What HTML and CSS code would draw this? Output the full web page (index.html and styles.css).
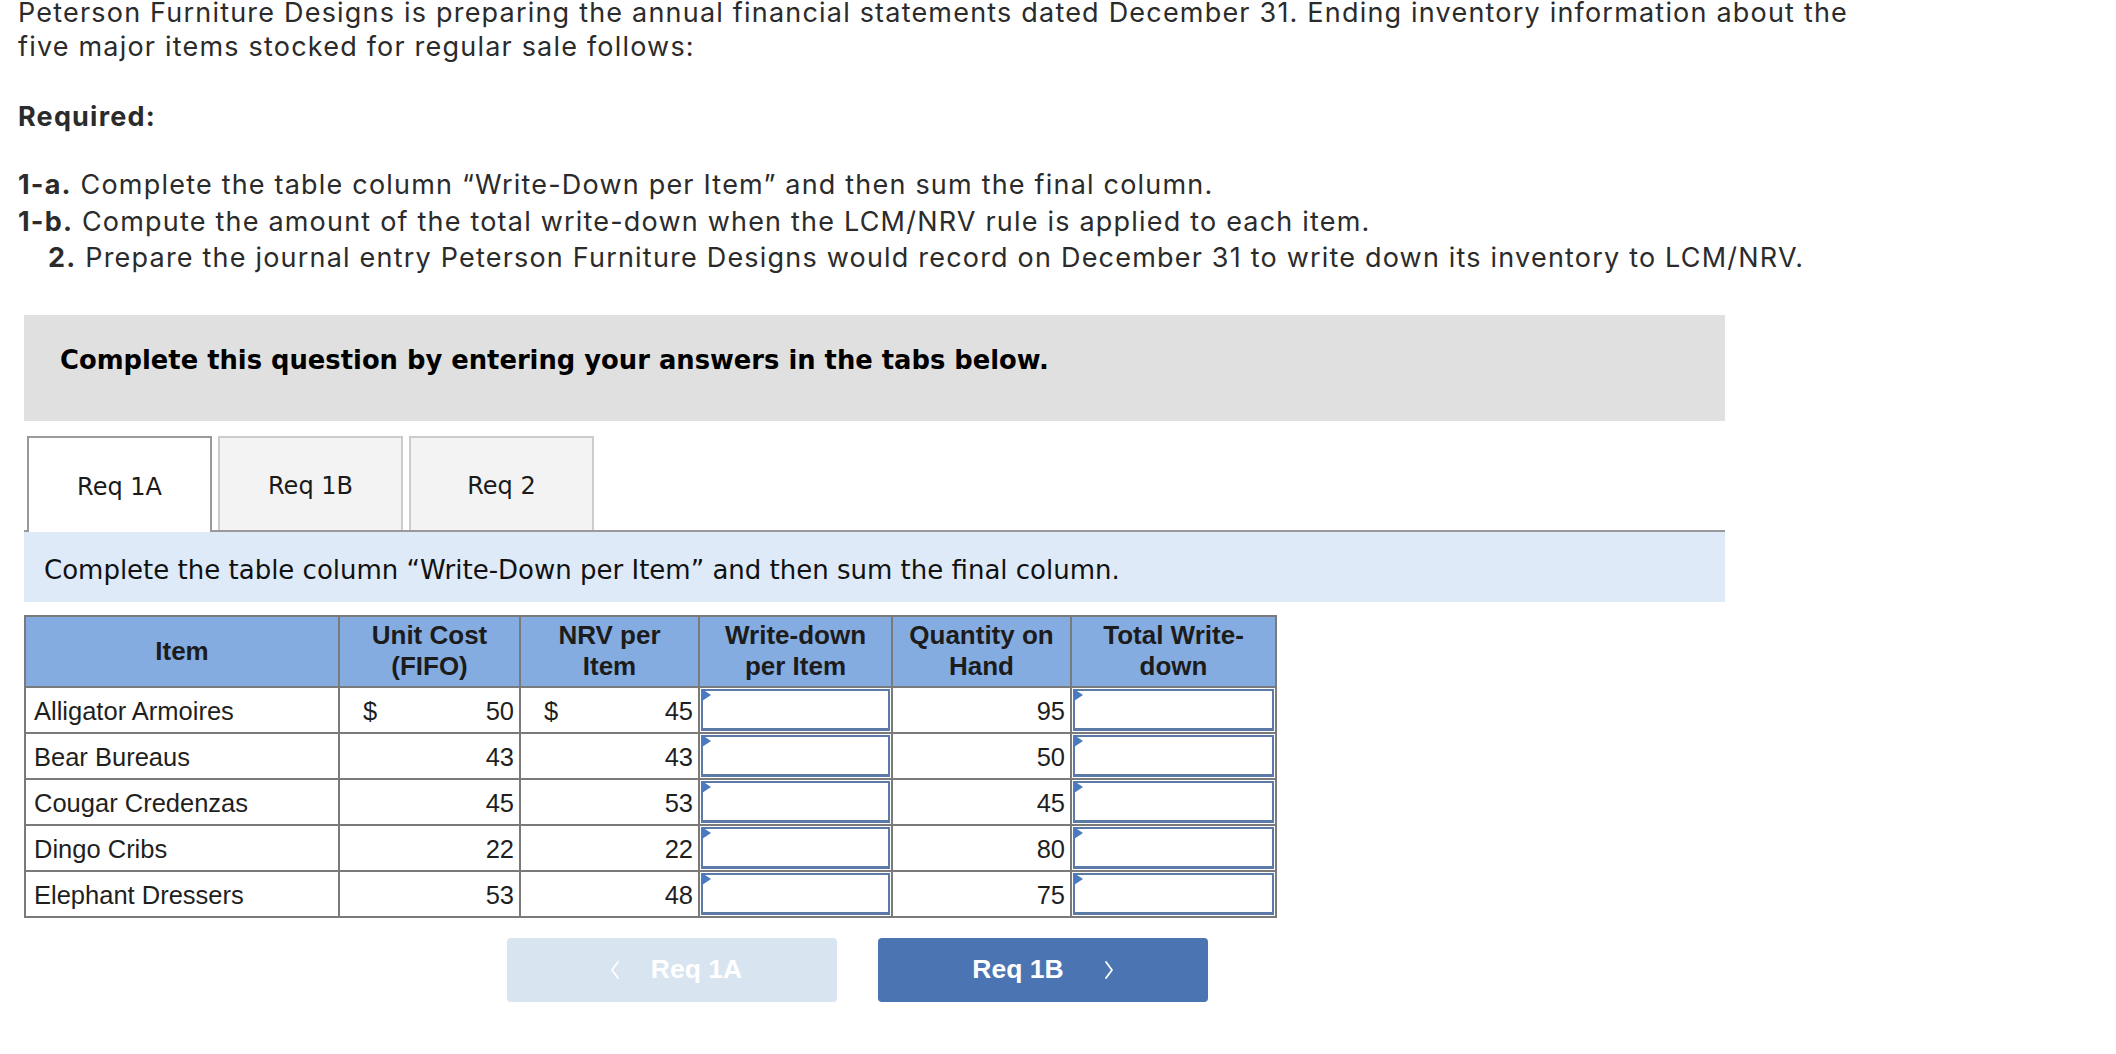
FILE: index.html
```html
<!DOCTYPE html>
<html lang="en">
<head>
<meta charset="utf-8">
<title>Peterson Furniture Designs</title>
<link rel="stylesheet" href="styles.css">
</head>
<body>
<div class="page">
  <p class="intro">Peterson Furniture Designs is preparing the annual financial statements dated December 31. Ending inventory information about the five major items stocked for regular sale follows:</p>
  <p class="req-title">Required:</p>
  <div class="req-list">
    <div class="req"><b>1-a.</b> Complete the table column “Write-Down per Item” and then sum the final column.</div>
    <div class="req"><b>1-b.</b> Compute the amount of the total write-down when the LCM/NRV rule is applied to each item.</div>
    <div class="req req-indent"><b>2.</b> Prepare the journal entry Peterson Furniture Designs would record on December 31 to write down its inventory to LCM/NRV.</div>
  </div>

  <div class="instructions">Complete this question by entering your answers in the tabs below.</div>

  <div class="tabs">
    <div class="tab active">Req 1A</div>
    <div class="tab">Req 1B</div>
    <div class="tab">Req 2</div>
  </div>

  <div class="prompt">Complete the table column “Write-Down per Item” and then sum the final column.</div>

  <table class="grid">
    <colgroup>
      <col class="c-item">
      <col class="c-cost">
      <col class="c-nrv">
      <col class="c-wd">
      <col class="c-qty">
      <col class="c-total">
    </colgroup>
    <thead>
      <tr>
        <th>Item</th>
        <th>Unit Cost<br>(FIFO)</th>
        <th>NRV per<br>Item</th>
        <th>Write-down<br>per Item</th>
        <th>Quantity on<br>Hand</th>
        <th>Total Write-<br>down</th>
      </tr>
    </thead>
    <tbody>
      <tr>
        <td class="name">Alligator Armoires</td>
        <td class="num"><span class="cur">$</span>50</td>
        <td class="num"><span class="cur">$</span>45</td>
        <td class="inp"><span class="flag"></span><span class="box"></span></td>
        <td class="num">95</td>
        <td class="inp"><span class="flag"></span><span class="box"></span></td>
      </tr>
      <tr>
        <td class="name">Bear Bureaus</td>
        <td class="num">43</td>
        <td class="num">43</td>
        <td class="inp"><span class="flag"></span><span class="box"></span></td>
        <td class="num">50</td>
        <td class="inp"><span class="flag"></span><span class="box"></span></td>
      </tr>
      <tr>
        <td class="name">Cougar Credenzas</td>
        <td class="num">45</td>
        <td class="num">53</td>
        <td class="inp"><span class="flag"></span><span class="box"></span></td>
        <td class="num">45</td>
        <td class="inp"><span class="flag"></span><span class="box"></span></td>
      </tr>
      <tr>
        <td class="name">Dingo Cribs</td>
        <td class="num">22</td>
        <td class="num">22</td>
        <td class="inp"><span class="flag"></span><span class="box"></span></td>
        <td class="num">80</td>
        <td class="inp"><span class="flag"></span><span class="box"></span></td>
      </tr>
      <tr>
        <td class="name">Elephant Dressers</td>
        <td class="num">53</td>
        <td class="num">48</td>
        <td class="inp"><span class="flag"></span><span class="box"></span></td>
        <td class="num">75</td>
        <td class="inp"><span class="flag"></span><span class="box"></span></td>
      </tr>
    </tbody>
  </table>

  <div class="nav">
    <div class="btn btn-prev">
      <svg class="chev" viewBox="0 0 10 20" width="10" height="20"><polyline points="8,2 2,10 8,18" fill="none" stroke="#ffffff" stroke-width="1.8" stroke-linecap="round" stroke-linejoin="round"/></svg>
      <span>Req 1A</span>
    </div>
    <div class="btn btn-next">
      <span>Req 1B</span>
      <svg class="chev" viewBox="0 0 10 20" width="10" height="20"><polyline points="2,2 8,10 2,18" fill="none" stroke="#ffffff" stroke-width="1.8" stroke-linecap="round" stroke-linejoin="round"/></svg>
    </div>
  </div>
</div>
</body>
</html>
```

FILE: styles.css
```css
* {
  box-sizing: border-box;
}

html, body {
  margin: 0;
  padding: 0;
  background: #ffffff;
}

.page {
  width: 2116px;
  padding: 0 391px 0 24px;
}

.intro,
.req-title,
.req-list {
  font-family: Inter, Roboto, "Liberation Sans", Arial, sans-serif;
  font-size: 27px;
  letter-spacing: 1.2px;
  color: #2b2b2b;
  margin-left: -6px;
  width: 1872px;
}

.intro {
  margin-top: -4px;
  margin-bottom: 0;
  line-height: 34px;
}

.req-title {
  margin: 36px 0 0 -6px;
  line-height: 34px;
  font-weight: 700;
}

.req-list {
  margin-top: 33px;
  line-height: 36.5px;
}

.req b {
  font-weight: 700;
}

.req-indent {
  padding-left: 30px;
}

.instructions {
  margin-top: 38px;
  background: #e0e0e0;
  font-family: "DejaVu Sans", Verdana, sans-serif;
  font-weight: 700;
  font-size: 25.8px;
  line-height: 30px;
  color: #000000;
  padding: 30px 36px 46px;
}

.tabs {
  margin-top: 15px;
  display: flex;
  gap: 6px;
  padding-left: 3px;
  border-bottom: 2px solid #9a9a9a;
  height: 96px;
}

.tab {
  width: 185px;
  height: 94px;
  display: flex;
  align-items: center;
  justify-content: center;
  padding-top: 4px;
  background: #f3f3f3;
  border: 2px solid #cccccc;
  border-bottom: none;
  font-family: "DejaVu Sans", Verdana, sans-serif;
  font-size: 24px;
  line-height: 30px;
  color: #1a1a1a;
}

.tab.active {
  background: #ffffff;
  border-color: #9a9a9a;
  height: 96px;
  position: relative;
  z-index: 1;
}

.prompt {
  background: #deeaf7;
  font-family: "DejaVu Sans", Verdana, sans-serif;
  font-size: 26px;
  line-height: 30px;
  color: #111111;
  padding: 23px 20px 17px;
}

.grid {
  margin-top: 13px;
  border-collapse: separate;
  border-spacing: 0;
  table-layout: fixed;
  width: 1253px;
  border-top: 2px solid #7a7a7a;
  border-left: 2px solid #7a7a7a;
  font-family: "Liberation Sans", Arial, sans-serif;
  color: #1f1f1f;
}

.c-item { width: 314px; }
.c-cost { width: 181px; }
.c-nrv { width: 179px; }
.c-wd { width: 193px; }
.c-qty { width: 179px; }
.c-total { width: 205px; }

.grid th,
.grid td {
  border-right: 2px solid #7a7a7a;
  border-bottom: 2px solid #7a7a7a;
}

.grid th {
  height: 71px;
  background: #85ace0;
  font-size: 26px;
  line-height: 31px;
  font-weight: 700;
  text-align: center;
  vertical-align: middle;
  padding: 0 2px;
  color: #1c1c1c;
}

.grid td {
  height: 46px;
  font-size: 25.5px;
  line-height: 28px;
  padding: 2px 6px 0 8px;
  vertical-align: middle;
  white-space: nowrap;
}

.grid td.num {
  text-align: right;
  padding-right: 5px;
}

.cur {
  float: left;
  margin-left: 15px;
}

.grid td.inp {
  padding: 1px;
  position: relative;
}

.box {
  display: block;
  height: 42px;
  border: 2px solid #5b7aa8;
  border-bottom-width: 3px;
  background: #ffffff;
}

.flag {
  position: absolute;
  left: 2px;
  top: 1px;
  width: 0;
  height: 0;
  border-top: 6px solid transparent;
  border-bottom: 6px solid transparent;
  border-left: 9px solid #4a7bc1;
}

.nav {
  margin-top: 20px;
  display: flex;
  gap: 41px;
  padding-left: 483px;
}

.btn {
  width: 330px;
  height: 64px;
  border-radius: 4px;
  display: flex;
  align-items: center;
  justify-content: center;
  font-family: "Liberation Sans", Arial, sans-serif;
  font-weight: 700;
  font-size: 26.5px;
  color: #ffffff;
}

.btn-prev {
  background: #d9e4f1;
  gap: 31px;
  padding-left: 8px;
}

.btn-next {
  background: #4a74b2;
  gap: 40px;
}

.chev {
  display: block;
}
```
